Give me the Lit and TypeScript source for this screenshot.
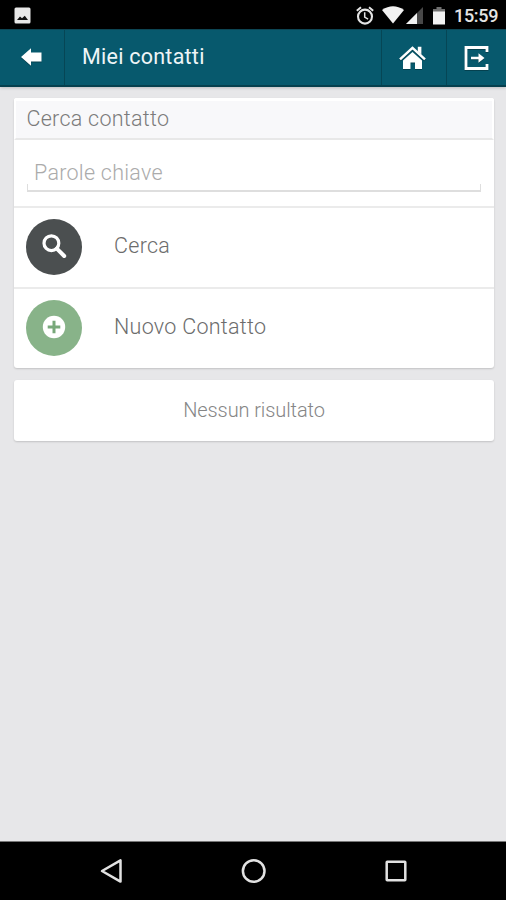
import { LitElement, html, css } from "lit";
import { customElement } from "lit/decorators.js";

@customElement("status-bar")
class StatusBar extends LitElement {
  static styles = css`
    :host { display: flex; align-items: center; height: 29px; background: #000; box-sizing: border-box; padding: 0 9px 0 14px; color: #e4e4e4; }
    svg { display: block; flex: none; }
    .picture { margin-top: 2px; }
    .spacer { flex: 1; }
    .alarm { margin: 1px 8px 0 0; }
    .wifi { margin: 1px 2px 0 0; }
    .cell { margin: 2px 10px 0 0; }
    .battery { margin: 2px 9px 0 0; }
    .clock { font: 500 18px/20px Roboto, sans-serif; width: 43px; margin-top: 3px; white-space: nowrap; letter-spacing: -0.3px; }
  `;
  render() {
    return html`
      <svg class="picture" width="17" height="17" viewBox="0 0 17 17"><rect x=".5" y=".5" width="16" height="16" rx="1.5" fill="#e8e8e8"/><path d="M3 13 6 9.6 8 11.3 10.8 8.8 14 13Z" fill="#111"/></svg>
      <span class="spacer"></span>
      <svg class="alarm" width="18" height="19" viewBox="0 0 18 19" fill="none" stroke="currentColor"><circle cx="9" cy="10.6" r="7" stroke-width="2.1"/><path d="M.8 4.8 5 1.3M17.2 4.8 13 1.3" stroke-width="2"/><path d="M8.7 6.3v4.8l3.4 2" stroke-width="1.5"/></svg>
      <svg class="wifi" width="22" height="18" viewBox="0 0 22 18"><path d="M0 4Q11-3.5 22 4L11 17.5Z" fill="#f2f2f2"/></svg>
      <svg class="cell" width="17" height="17" viewBox="0 0 17 17"><path d="M0 17 17 0V17Z" fill="#484848"/><path d="M0 17 11 6V17Z" fill="#f2f2f2"/></svg>
      <svg class="battery" width="12" height="18" viewBox="0 0 12 18"><path d="M0 2h3.5V0h5v2H12v3H0Z" fill="#707070"/><path d="M0 4.5h12V17.5H0Z" fill="#f2f2f2"/></svg>
      <span class="clock">15:59</span>
    `;
  }
}

@customElement("title-bar")
class TitleBar extends LitElement {
  static styles = css`
    :host { display: flex; height: 58px; box-sizing: border-box; background: #07596d; border-top: 1px solid #0d4654; border-bottom: 2px solid #06404e; box-shadow: 0 1px 3px rgba(0, 0, 0, .18); position: relative; }
    .cell { display: flex; align-items: center; justify-content: center; box-sizing: border-box; color: #fff; }
    .back { width: 65px; border-right: 1px solid #064655; padding: 0 2px 1px 0; }
    .title { flex: 1; font: 400 21.5px/28px Roboto, sans-serif; letter-spacing: .25px; color: #eef5f7; padding: 13px 0 0 17px; white-space: nowrap; }
    .home, .exit { border-left: 1px solid #064655; }
    .home { width: 65px; padding-right: 3px; }
    .exit { width: 60px; padding-right: 1px; }
    svg { display: block; filter: drop-shadow(0 1px 0 #05414f); }
  `;
  render() {
    return html`
      <div class="cell back"><svg width="21" height="18" viewBox="0 0 21 18"><path d="M0 9 10 .3V4.5h10.5v9H10v4.2Z" fill="currentColor"/></svg></div>
      <div class="title">Miei contatti</div>
      <div class="cell home"><svg width="27" height="24" viewBox="0 0 27 24"><path d="M1 13.4 13.5 1.9 26 13.4" fill="none" stroke="currentColor" stroke-width="2.5"/><path d="M18.8.8h3.6v8L18.8 5.5Z" fill="currentColor"/><path d="M13.5 6 23 14.5V23H16v-6.5h-4.5V23H4V14.5Z" fill="currentColor"/></svg></div>
      <div class="cell exit"><svg width="25" height="24" viewBox="0 0 25 24"><path d="M23 6V1.5H2v21H23V18" fill="none" stroke="currentColor" stroke-width="2.8"/><path d="M7 12h9" stroke="currentColor" stroke-width="2.5"/><path d="M14.5 7.3 20.5 12l-6 4.7Z" fill="currentColor"/></svg></div>
    `;
  }
}

@customElement("nav-bar")
class NavBar extends LitElement {
  static styles = css`
    :host { display: flex; justify-content: space-between; align-items: center; height: 58px; box-sizing: border-box; background: #000; padding: 0 98px 0 100px; }
    svg { display: block; fill: none; stroke: #e2e2e2; stroke-width: 2.5; }
  `;
  render() {
    return html`
      <svg width="24" height="26" viewBox="0 0 24 26"><path d="M2 13 20.5 2.4V23.6Z" stroke-linejoin="round"/></svg>
      <svg width="26" height="26" viewBox="0 0 26 26"><circle cx="12.7" cy="13" r="10.8"/></svg>
      <svg width="24" height="24" viewBox="0 0 24 24"><rect x="2.7" y="2.7" width="18.6" height="18.6" rx=".5"/></svg>
    `;
  }
}

@customElement("app-root")
class AppRoot extends LitElement {
  static styles = css`
    :host { display: flex; flex-direction: column; height: 900px; background: #e7e7e9; font-family: Roboto, sans-serif; font-weight: 300; color: #6c6c6c; overflow: hidden; }
    main { flex: 1; padding: 11px 12px 0 14px; border-bottom: 1px solid #777; }
    .card { background: #fff; border-radius: 3px; box-shadow: 0 1px 2px rgba(0, 0, 0, .16); overflow: hidden; }
    .card + .card { margin-top: 12px; }
    .heading { box-sizing: border-box; height: 42px; border: 2px solid #fff; border-bottom: 2px solid #e8e8e8; border-top-width: 3px; background: #f8f8fa; padding: 4px 0 0 10.5px; font-size: 21.5px; line-height: 28px; letter-spacing: .27px; color: #7b7b7b; }
    .search { height: 66px; box-sizing: border-box; padding: 17px 13px 0; }
    .field { box-sizing: border-box; height: 35px; padding: 2px 0 0 7px; font-size: 21.5px; line-height: 28px; letter-spacing: .27px; color: #ababab; border-bottom: 2px solid #dedede; position: relative; }
    .field::before, .field::after { content: ""; position: absolute; bottom: -2px; width: 1px; height: 8px; background: #dedede; }
    .field::before { left: 0; }
    .field::after { right: 0; }
    .action { display: flex; align-items: center; height: 81px; box-sizing: border-box; border-top: 2px solid #ebebeb; padding: 0 0 1px 12px; }
    .disc { width: 56px; height: 56px; border-radius: 50%; display: flex; align-items: center; justify-content: center; margin-right: 32px; }
    .dark { background: #4b4f50; }
    .green { background: #88b389; }
    .label { font-size: 21.5px; line-height: 28px; letter-spacing: .28px; padding-bottom: 3px; }
    .empty { height: 61px; text-align: center; font-size: 20px; line-height: 61px; letter-spacing: -.1px; color: #868686; }
    svg { display: block; margin-bottom: 2px; }
  `;
  render() {
    return html`
      <status-bar></status-bar>
      <title-bar></title-bar>
      <main>
        <section class="card">
          <div class="heading">Cerca contatto</div>
          <div class="search"><div class="field">Parole chiave</div></div>
          <div class="action">
            <span class="disc dark"><svg width="26" height="26" viewBox="0 0 26 26" fill="none" stroke="#fff"><circle cx="10.4" cy="10.2" r="7.4" stroke-width="3.2"/><path d="M15.8 15.6 23.2 23" stroke-width="4" stroke-linecap="round"/></svg></span>
            <span class="label">Cerca</span>
          </div>
          <div class="action">
            <span class="disc green"><svg width="24" height="24" viewBox="0 0 24 24"><circle cx="12" cy="12" r="11.2" fill="#fff"/><path d="M12 5.7v12.6M5.7 12h12.6" stroke="#78a87a" stroke-width="3"/></svg></span>
            <span class="label">Nuovo Contatto</span>
          </div>
        </section>
        <section class="card"><div class="empty">Nessun risultato</div></section>
      </main>
      <nav-bar></nav-bar>
    `;
  }
}
